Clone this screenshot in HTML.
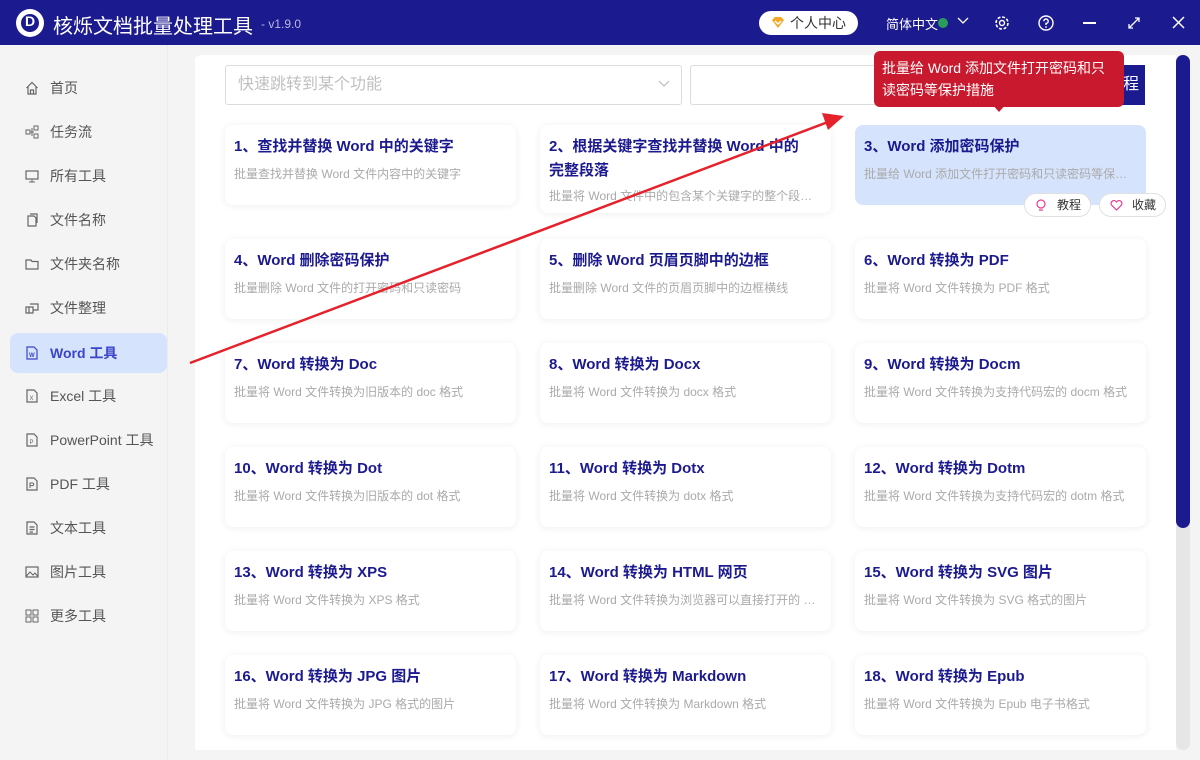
<!DOCTYPE html>
<html><head><meta charset="utf-8"><style>
*{margin:0;padding:0;box-sizing:border-box}
body{width:1200px;height:760px;overflow:hidden;background:#f4f4f4;font-family:"Liberation Sans","Noto Sans CJK SC",sans-serif;position:relative}
.hdr{position:absolute;left:0;top:0;width:1200px;height:45px;background:#1c1a8f;color:#fff}
.abs{position:absolute}
.side{position:absolute;left:0;top:45px;width:168px;height:715px;background:#f4f4f4;border-right:1px solid #ececec}
.nav{position:absolute;left:10px;width:157px;height:40px;font-size:14px;color:#555;line-height:40px;padding-left:40px;border-radius:8px}
.nav svg{position:absolute;left:15px;top:13px}
.nav.on{background:#d5e3fc;color:#3b45c9;font-weight:bold}
.main{position:absolute;left:195px;top:55px;width:981px;height:695px;background:#fff;border-radius:6px 0 0 0}
.card{position:absolute;width:291px;height:80px;background:#fff;border-radius:8px;box-shadow:0 1px 8px rgba(0,0,0,.07);padding:10px 9px}
.card .t{font-size:15px;font-weight:bold;color:#1c1a8f;line-height:24px;white-space:nowrap}
.card .d{font-size:12px;color:#aaa;margin-top:6px;white-space:nowrap;overflow:hidden;text-overflow:ellipsis}
.pill{position:absolute;height:24px;border:1px solid #e0e0e0;border-radius:12px;background:#fff;font-size:12px;color:#333;line-height:22px}
</style></head><body>
<div class="hdr">
 <div class="abs" style="left:16px;top:9px;width:28px;height:28px;border-radius:50%;background:#fff"></div>
 <div class="abs" style="left:21px;top:14px;width:18px;height:18px;border-radius:50%;background:#1c1a8f"></div>
 <div class="abs" style="left:25px;top:13px;color:#fff;font-weight:bold;font-size:14px">D</div>
 <div class="abs" style="left:53px;top:10px;font-size:20px;color:#fff">核烁文档批量处理工具</div>
 <div class="abs" style="left:261px;top:17px;font-size:12px;color:#b9b8e0">- v1.9.0</div>
 <div class="abs" style="left:759px;top:11px;width:99px;height:24px;border-radius:12px;background:#fff;color:#333;font-size:14px;line-height:24px;padding-left:31px">个人中心</div>
 <svg class="abs" style="left:771px;top:16px" width="14" height="13"><path d="M1 4 L4 1 H10 L13 4 L7 12 Z" fill="#f5a623"/><path d="M4 5 L7 8 L10 5" stroke="#fff" stroke-width="1.5" fill="none"/></svg>
 <div class="abs" style="left:886px;top:14px;font-size:13px;color:#fff">简体中文</div>
 <div class="abs" style="left:938px;top:18px;width:10px;height:10px;border-radius:50%;background:#2a9d5c"></div>
 <svg class="abs" style="left:957px;top:17px" width="12" height="8"><path d="M1 1 L6 6 L11 1" stroke="#fff" fill="none" stroke-width="1.3"/></svg>
 <svg class="abs" style="left:994px;top:15px" width="16" height="16"><circle cx="8" cy="8" r="2.5" stroke="#fff" fill="none" stroke-width="1.4"/><circle cx="8" cy="8" r="6" stroke="#fff" fill="none" stroke-width="1.6" stroke-dasharray="3 1.7"/></svg>
 <svg class="abs" style="left:1038px;top:15px" width="16" height="16"><circle cx="8" cy="8" r="7" stroke="#fff" fill="none" stroke-width="1.4"/><path d="M5.8 6.2a2.2 2.2 0 1 1 2.2 2.2V10" stroke="#fff" fill="none" stroke-width="1.4"/><circle cx="8" cy="12" r=".9" fill="#fff"/></svg>
 <div class="abs" style="left:1083px;top:22px;width:13px;height:2px;background:#fff"></div>
 <svg class="abs" style="left:1127px;top:16px" width="14" height="14"><path d="M2 12 L12 2 M8 2 H12 V6 M2 8 V12 H6" stroke="#fff" fill="none" stroke-width="1.3"/></svg>
 <svg class="abs" style="left:1172px;top:16px" width="13" height="13"><path d="M1 1 L12 12 M12 1 L1 12" stroke="#fff" stroke-width="1.5"/></svg>
</div>
<div class="side">
 <div class="nav" style="top:23px"><svg width="14" height="14"><path d="M1.5 7 L7 1.5 L12.5 7 M3 6 V13 H11 V6 M5.5 13 V9 H8.5 V13" stroke="#666" fill="none" stroke-width="1.2"/></svg>首页</div>
 <div class="nav" style="top:67px"><svg width="14" height="14"><rect x="1" y="5" width="4" height="4" stroke="#666" fill="none"/><rect x="9" y="1" width="4" height="4" stroke="#666" fill="none"/><rect x="9" y="9" width="4" height="4" stroke="#666" fill="none"/><path d="M5 7 H9 M7 3 V11" stroke="#666" fill="none"/></svg>任务流</div>
 <div class="nav" style="top:111px"><svg width="14" height="14"><rect x="1" y="2" width="12" height="8" stroke="#666" fill="none" stroke-width="1.2"/><path d="M4 13 H10 M7 10 V13" stroke="#666"/></svg>所有工具</div>
 <div class="nav" style="top:155px"><svg width="14" height="14"><path d="M3 3 H9 L11 5 V13 H3 Z M5 1 H12 V10" stroke="#666" fill="none" stroke-width="1.2"/></svg>文件名称</div>
 <div class="nav" style="top:199px"><svg width="14" height="14"><path d="M1 3 H6 L7 4.5 H13 V12 H1 Z" stroke="#666" fill="none" stroke-width="1.2"/></svg>文件夹名称</div>
 <div class="nav" style="top:243px"><svg width="14" height="14"><path d="M1 6 H8 V12 H1 Z M5 3 H13 V9 H8 M4 6 V12" stroke="#666" fill="none" stroke-width="1.2"/></svg>文件整理</div>
 <div class="nav on" style="top:288px"><svg width="14" height="14"><path d="M2 1 H9 L12 4 V13 H2 Z" stroke="#3b45c9" fill="none" stroke-width="1.2"/><text x="4" y="11" font-size="6" fill="#3b45c9">W</text></svg>Word 工具</div>
 <div class="nav" style="top:331px"><svg width="14" height="14"><path d="M2 1 H9 L12 4 V13 H2 Z" stroke="#666" fill="none" stroke-width="1.2"/><text x="4.5" y="11" font-size="6" fill="#666">X</text></svg>Excel 工具</div>
 <div class="nav" style="top:375px"><svg width="14" height="14"><path d="M2 1 H9 L12 4 V13 H2 Z" stroke="#666" fill="none" stroke-width="1.2"/><text x="4.5" y="11" font-size="6" fill="#666">P</text></svg>PowerPoint 工具</div>
 <div class="nav" style="top:419px"><svg width="14" height="14"><path d="M2 1 H9 L12 4 V13 H2 Z" stroke="#666" fill="none" stroke-width="1.2"/><path d="M5 11 V6 H7.5 A1.3 1.3 0 0 1 7.5 8.6 H5" stroke="#666" fill="none"/></svg>PDF 工具</div>
 <div class="nav" style="top:463px"><svg width="14" height="14"><path d="M2 1 H9 L12 4 V13 H2 Z M4.5 6 H9.5 M4.5 8.5 H9.5 M4.5 11 H8" stroke="#666" fill="none" stroke-width="1.2"/></svg>文本工具</div>
 <div class="nav" style="top:507px"><svg width="14" height="14"><rect x="1" y="2" width="12" height="10" stroke="#666" fill="none" stroke-width="1.2"/><path d="M1.5 11 L5 7 L8 10 L10 8 L12.5 11" stroke="#666" fill="none"/></svg>图片工具</div>
 <div class="nav" style="top:551px"><svg width="14" height="14"><rect x="1" y="1" width="5" height="5" stroke="#666" fill="none"/><rect x="8" y="1" width="5" height="5" stroke="#666" fill="none"/><rect x="1" y="8" width="5" height="5" stroke="#666" fill="none"/><rect x="8" y="8" width="5" height="5" stroke="#666" fill="none"/></svg>更多工具</div>
</div>
<div class="main"></div>
<div class="abs" style="left:225px;top:65px;width:457px;height:40px;border:1px solid #dcdcdc;border-radius:3px;font-size:16px;color:#c0c0c0;line-height:38px;padding-left:12px">快速跳转到某个功能</div>
<svg class="abs" style="left:658px;top:80px" width="12" height="8"><path d="M1 1 L6 6 L11 1" stroke="#bbb" fill="none" stroke-width="1.2"/></svg>
<div class="abs" style="left:690px;top:65px;width:400px;height:40px;border:1px solid #dcdcdc;border-radius:3px"></div>
<div class="abs" style="left:1085px;top:65px;width:60px;height:40px;background:#1c1a8f;color:#fff;font-size:16px;line-height:40px;text-align:right;padding-right:6px">程</div>
<div class="abs" style="left:1176px;top:55px;width:14px;height:695px;background:#e6e6e6;border-radius:7px"></div>
<div class="abs" style="left:1176px;top:55px;width:14px;height:473px;background:#1c1a8f;border-radius:7px"></div>

<div class="card" style="left:225px;top:125px"><div class="t">1、查找并替换 Word 中的关键字</div><div class="d">批量查找并替换 Word 文件内容中的关键字</div></div>
<div class="card" style="left:540px;top:125px;height:88px"><div class="t" style="white-space:normal;width:258px">2、根据关键字查找并替换 Word 中的完整段落</div><div class="d" style="margin-top:4px">批量将 Word 文件中的包含某个关键字的整个段落...</div></div>
<div class="card" style="left:855px;top:125px;background:#d5e3fc;box-shadow:none"><div class="t">3、Word 添加密码保护</div><div class="d">批量给 Word 添加文件打开密码和只读密码等保护...</div></div>
<div class="pill" style="left:1024px;top:193px;width:67px;padding-left:32px">教程</div>
<svg class="abs" style="left:1036px;top:199px" width="10" height="13"><circle cx="5" cy="5" r="4" stroke="#e83e8c" fill="none" stroke-width="1.2"/><path d="M3 11 H7" stroke="#e83e8c" stroke-width="1.2"/></svg>
<div class="pill" style="left:1099px;top:193px;width:67px;padding-left:32px">收藏</div>
<svg class="abs" style="left:1110px;top:200px" width="13" height="11"><path d="M6.5 10 L1.5 5 A2.6 2.6 0 0 1 6.5 2 A2.6 2.6 0 0 1 11.5 5 Z" stroke="#e83e8c" fill="none" stroke-width="1.2"/></svg>

<div class="card" style="left:225px;top:239px"><div class="t">4、Word 删除密码保护</div><div class="d">批量删除 Word 文件的打开密码和只读密码</div></div>
<div class="card" style="left:540px;top:239px"><div class="t">5、删除 Word 页眉页脚中的边框</div><div class="d">批量删除 Word 文件的页眉页脚中的边框横线</div></div>
<div class="card" style="left:855px;top:239px"><div class="t">6、Word 转换为 PDF</div><div class="d">批量将 Word 文件转换为 PDF 格式</div></div>
<div class="card" style="left:225px;top:343px"><div class="t">7、Word 转换为 Doc</div><div class="d">批量将 Word 文件转换为旧版本的 doc 格式</div></div>
<div class="card" style="left:540px;top:343px"><div class="t">8、Word 转换为 Docx</div><div class="d">批量将 Word 文件转换为 docx 格式</div></div>
<div class="card" style="left:855px;top:343px"><div class="t">9、Word 转换为 Docm</div><div class="d">批量将 Word 文件转换为支持代码宏的 docm 格式</div></div>
<div class="card" style="left:225px;top:447px"><div class="t">10、Word 转换为 Dot</div><div class="d">批量将 Word 文件转换为旧版本的 dot 格式</div></div>
<div class="card" style="left:540px;top:447px"><div class="t">11、Word 转换为 Dotx</div><div class="d">批量将 Word 文件转换为 dotx 格式</div></div>
<div class="card" style="left:855px;top:447px"><div class="t">12、Word 转换为 Dotm</div><div class="d">批量将 Word 文件转换为支持代码宏的 dotm 格式</div></div>
<div class="card" style="left:225px;top:551px"><div class="t">13、Word 转换为 XPS</div><div class="d">批量将 Word 文件转换为 XPS 格式</div></div>
<div class="card" style="left:540px;top:551px"><div class="t">14、Word 转换为 HTML 网页</div><div class="d">批量将 Word 文件转换为浏览器可以直接打开的 H...</div></div>
<div class="card" style="left:855px;top:551px"><div class="t">15、Word 转换为 SVG 图片</div><div class="d">批量将 Word 文件转换为 SVG 格式的图片</div></div>
<div class="card" style="left:225px;top:655px"><div class="t">16、Word 转换为 JPG 图片</div><div class="d">批量将 Word 文件转换为 JPG 格式的图片</div></div>
<div class="card" style="left:540px;top:655px"><div class="t">17、Word 转换为 Markdown</div><div class="d">批量将 Word 文件转换为 Markdown 格式</div></div>
<div class="card" style="left:855px;top:655px"><div class="t">18、Word 转换为 Epub</div><div class="d">批量将 Word 文件转换为 Epub 电子书格式</div></div>

<div class="abs" style="left:874px;top:51px;width:250px;height:56px;background:#c8192e;border-radius:6px;color:#fff;font-size:14px;line-height:22px;padding:6px 8px"><div style="width:230px">批量给 Word 添加文件打开密码和只读密码等保护措施</div></div>
<div class="abs" style="left:992px;top:104px;width:0;height:0;border-left:7px solid transparent;border-right:7px solid transparent;border-top:8px solid #c8192e"></div>
<svg class="abs" style="left:0;top:0" width="1200" height="760"><line x1="190" y1="363" x2="828" y2="122" stroke="#e5222b" stroke-width="2.5"/><path d="M844 116 L822 113 L828 130 Z" fill="#e5222b"/></svg>
</body></html>
